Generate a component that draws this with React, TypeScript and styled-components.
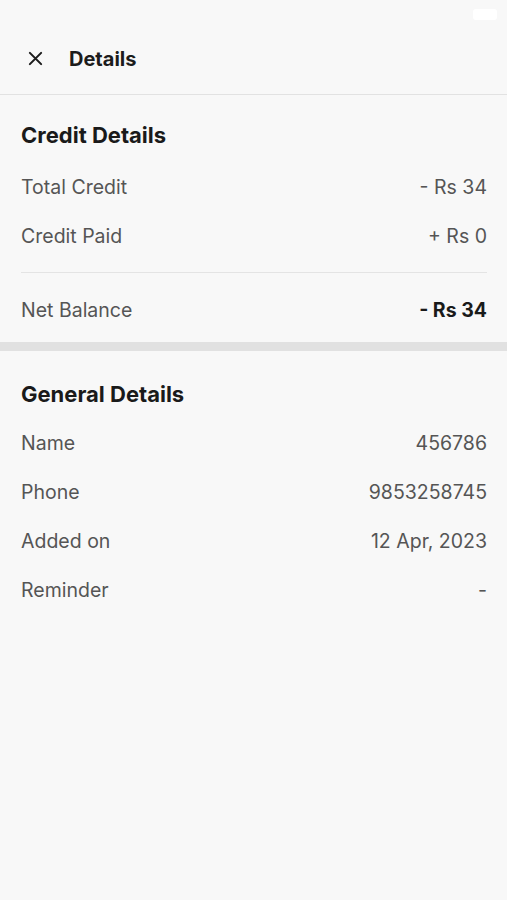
import React from "react";
import styled, { createGlobalStyle } from "styled-components";

const Global = createGlobalStyle`
  html, body { margin: 0; padding: 0; background: #f8f8f8; }
  body { font-family: Inter, "Noto Sans", sans-serif; -webkit-font-smoothing: antialiased; }
`;

const Page = styled.div`
  width: 507px;
  min-height: 900px;
  background: #f8f8f8;
  display: flex;
  flex-direction: column;
`;

const StatusBar = styled.div`
  height: 28px;
  display: flex;
  align-items: center;
  justify-content: flex-end;
  padding: 0 10px 0 60px;
`;

const Battery = styled.div`
  width: 24px;
  height: 11px;
  border-radius: 3px;
  background: #ffffff;
`;

const Header = styled.header`
  height: 67px;
  box-sizing: border-box;
  display: flex;
  align-items: center;
  gap: 26px;
  padding: 0 0 5px 27px;
  border-bottom: 1px solid #e2e2e2;
`;

const CloseButton = styled.button`
  border: 0;
  background: transparent;
  padding: 0;
  width: 16px;
  height: 16px;
  display: flex;
  align-items: center;
  justify-content: center;
  color: #1c1c1c;
`;

const Title = styled.h1`
  margin: 0;
  font-size: 20px;
  font-weight: 700;
  color: #1c1c1c;
`;

const Section = styled.section<{ $top: number; $bottom?: number }>`
  padding: ${(p) => p.$top}px 20px ${(p) => p.$bottom ?? 0}px 21px;
  display: flex;
  flex-direction: column;
`;

const SectionTitle = styled.h2<{ $after?: number }>`
  margin: 0 0 ${(p) => p.$after ?? 0}px;
  height: 49px;
  display: flex;
  align-items: center;
  font-size: 22px;
  font-weight: 700;
  color: #1a1a1a;
`;

const Row = styled.div`
  height: 49px;
  display: flex;
  align-items: center;
  justify-content: space-between;
  font-size: 19.5px;
  color: #555555;
`;

const Value = styled.span<{ $strong?: boolean }>`
  color: ${(p) => (p.$strong ? "#1a1a1a" : "#555555")};
  font-weight: ${(p) => (p.$strong ? 700 : 400)};
`;

const Divider = styled.hr`
  margin: 12px 0 12px;
  border: 0;
  border-top: 1px solid #e4e4e4;
`;

const Band = styled.div`
  height: 9px;
  background: #e1e1e1;
`;

const X = () => (
  <svg width="15" height="15" viewBox="0 0 16 16" fill="none">
    <path d="M2 2L14 14M14 2L2 14" stroke="currentColor" strokeWidth="2.2" strokeLinecap="round" />
  </svg>
);

export default function App() {
  return (
    <Page>
      <Global />
      <StatusBar>
        <Battery />
      </StatusBar>
      <Header>
        <CloseButton aria-label="Close"><X /></CloseButton>
        <Title>Details</Title>
      </Header>
      <Section $top={15} $bottom={8}>
        <SectionTitle $after={3}>Credit Details</SectionTitle>
        <Row><span>Total Credit</span><Value>- Rs 34</Value></Row>
        <Row><span>Credit Paid</span><Value>+ Rs 0</Value></Row>
        <Divider />
        <Row><span>Net Balance</span><Value $strong>- Rs 34</Value></Row>
      </Section>
      <Band />
      <Section $top={18}>
        <SectionTitle>General Details</SectionTitle>
        <Row><span>Name</span><Value>456786</Value></Row>
        <Row><span>Phone</span><Value>9853258745</Value></Row>
        <Row><span>Added on</span><Value>12 Apr, 2023</Value></Row>
        <Row><span>Reminder</span><Value>-</Value></Row>
      </Section>
    </Page>
  );
}
